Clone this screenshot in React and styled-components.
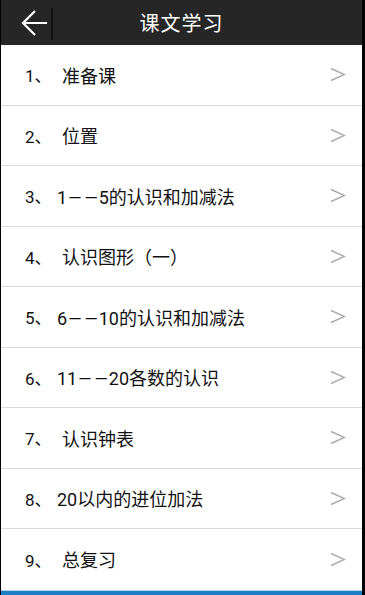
import styled, { createGlobalStyle } from 'styled-components';

const GlobalStyle = createGlobalStyle`
  html, body {
    margin: 0;
    padding: 0;
    background: #000;
  }
  body {
    font-family: Roboto, "Noto Sans CJK SC", sans-serif;
  }
`;

const Screen = styled.div`
  width: 361px;
  height: 595px;
  margin-left: 1px;
  display: flex;
  flex-direction: column;
  background: #fff;
  overflow: hidden;
`;

const Header = styled.header`
  height: 45px;
  flex-shrink: 0;
  display: grid;
  grid-template-columns: 52px 1fr 52px;
  align-items: center;
  background: #262626;
`;

const BackButton = styled.div`
  height: 100%;
  display: flex;
  align-items: center;
  justify-content: space-between;
  padding-left: 20px;
  box-sizing: border-box;
`;

const Divider = styled.span`
  width: 2px;
  height: 32px;
  margin-top: 3px;
  background: #111;
`;

const Title = styled.h1`
  margin: 0;
  text-align: center;
  color: #fff;
  font-size: 20px;
  font-weight: 400;
  letter-spacing: 1px;
  font-family: "Noto Sans CJK SC", sans-serif;
`;

const List = styled.ul`
  list-style: none;
  margin: 0;
  padding: 0;
  flex: 1;
`;

const Row = styled.li`
  height: 60.5px;
  box-sizing: border-box;
  display: flex;
  align-items: center;
  padding: 0 16px 0 24px;
  border-bottom: 1px solid #d9d9d9;
  color: #111;
  font-size: 18px;
  &:last-child {
    border-bottom: none;
  }
`;

const Num = styled.span`
  width: 32px;
  flex-shrink: 0;
  font-size: 17px;
`;

const Label = styled.span`
  flex: 1;
  padding-left: ${(p) => (p.$cjk ? '5px' : '0')};
  white-space: nowrap;
`;

const Dash = styled.span`
  font-family: Roboto, sans-serif;
  font-size: 17px;
  line-height: 1;
  letter-spacing: 3px;
  margin: 0 -2px 0 1px;
`;

const BottomBar = styled.div`
  height: 6px;
  flex-shrink: 0;
  background: #1c7fc6;
  border-top: 1px solid #b9d4e8;
`;

const lessons = [
  '准备课',
  '位置',
  '1——5的认识和加减法',
  '认识图形（一）',
  '6——10的认识和加减法',
  '11——20各数的认识',
  '认识钟表',
  '20以内的进位加法',
  '总复习',
];

function renderTitle(text) {
  const parts = text.split('——');
  if (parts.length === 1) return text;
  return (
    <>
      {parts[0]}
      <Dash>——</Dash>
      {parts[1]}
    </>
  );
}

function Chevron() {
  return (
    <svg width="17" height="15" viewBox="0 0 17 15">
      <polyline points="2,1.5 15.5,7.5 2,13.5" fill="none" stroke="#ababab" strokeWidth="1.4" />
    </svg>
  );
}

function BackArrow() {
  return (
    <svg width="27" height="28" viewBox="0 0 27 28">
      <path d="M26 14H2.5M14 2L2 14l12 12" fill="none" stroke="#fff" strokeWidth="2.2" />
    </svg>
  );
}

export default function App() {
  return (
    <>
      <GlobalStyle />
      <Screen>
        <Header>
          <BackButton>
            <BackArrow />
            <Divider />
          </BackButton>
          <Title>课文学习</Title>
          <span />
        </Header>
        <List>
          {lessons.map((title, i) => (
            <Row key={title}>
              <Num>{i + 1}、</Num>
              <Label $cjk={!/^\d/.test(title)}>{renderTitle(title)}</Label>
              <Chevron />
            </Row>
          ))}
        </List>
        <BottomBar />
      </Screen>
    </>
  );
}
